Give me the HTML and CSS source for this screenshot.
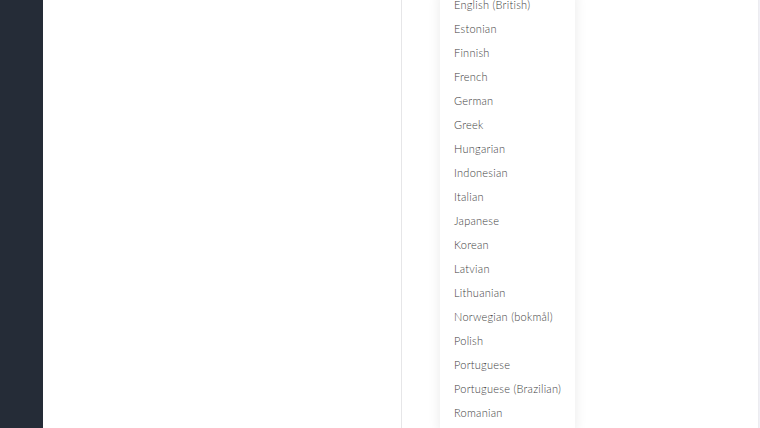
FILE: index.html
```html
<!DOCTYPE html>
<html lang="en">
<head>
    <meta charset="UTF-8">
    <meta name="viewport" content="width=device-width, initial-scale=1.0">
    <title>Language</title>
    <link rel="stylesheet" href="styles.css">
</head>
<body>
    <aside class="sidebar"></aside>
    <main class="main">
        <div class="blank"></div>
        <section class="panel">
            <ul class="menu">
                <li>English (British)</li>
                <li>Estonian</li>
                <li>Finnish</li>
                <li>French</li>
                <li>German</li>
                <li>Greek</li>
                <li>Hungarian</li>
                <li>Indonesian</li>
                <li>Italian</li>
                <li>Japanese</li>
                <li>Korean</li>
                <li>Latvian</li>
                <li>Lithuanian</li>
                <li>Norwegian (bokmål)</li>
                <li>Polish</li>
                <li>Portuguese</li>
                <li>Portuguese (Brazilian)</li>
                <li>Romanian</li>
            </ul>
        </section>
        <div class="edge"></div>
    </main>
</body>
</html>
```

FILE: styles.css
```css
html, body {
    height: 100%;
}
body {
    margin: 0;
    font-family: Lato, "Open Sans", sans-serif;
    background: #ffffff;
    color: #3c3c3c;
    display: flex;
    overflow: hidden;
}
.sidebar {
    width: 43px;
    flex-shrink: 0;
    background-color: #252c37;
}
.main {
    flex: 1;
    display: flex;
}
.blank {
    width: 358px;
}
.panel {
    position: relative;
    flex: 1;
    border-left: 1px solid #e6e6e8;
    border-right: 1px solid #ececf0;
}
.edge {
    width: 1px;
    background: #f0f0f6;
}
.menu {
    position: absolute;
    top: -7px;
    left: 38px;
    width: 135px;
    margin: 0;
    padding: 0 0 8px;
    list-style: none;
    background: #ffffff;
    box-shadow: 0 0 12px rgba(0, 0, 0, 0.09);
}
.menu li {
    height: 24px;
    line-height: 24px;
    padding-left: 14px;
    font-size: 11px;
    font-weight: 300;
    letter-spacing: 0.25px;
    white-space: nowrap;
}
```
